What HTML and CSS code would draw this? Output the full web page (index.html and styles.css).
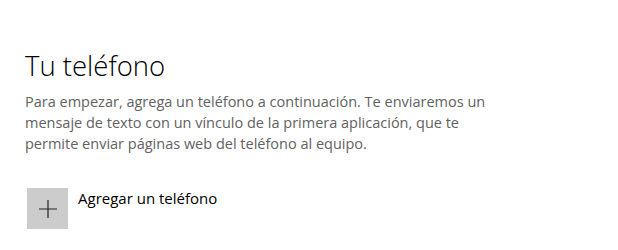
FILE: index.html
```html
<!DOCTYPE html>
<html lang="es">
<head>
<meta charset="utf-8">
<link rel="stylesheet" href="styles.css">
</head>
<body>
<main class="page">
  <h1 class="title">Tu teléfono</h1>
  <p class="desc">Para empezar, agrega un teléfono a continuación. Te enviaremos un mensaje de texto con un vínculo de la primera aplicación, que te permite enviar páginas web del teléfono al equipo.</p>
  <div class="add">
    <div class="add-btn">
      <svg width="18" height="18" viewBox="0 0 18 18"><path d="M9 0v18M0 9h18" stroke="#222" stroke-width="1.2" fill="none"/></svg>
    </div>
    <span class="add-label">Agregar un teléfono</span>
  </div>
</main>
</body>
</html>
```
FILE: styles.css
```css
html, body {
  margin: 0;
  background: #fff;
}
.page {
  padding: 49px 0 0 25px;
  font-family: "Open Sans", "Noto Sans", sans-serif;
}
.title {
  margin: 0;
  font-size: 27.5px;
  font-weight: 300;
  line-height: 34px;
  color: #000;
}
.desc {
  margin: 8px 0 0;
  width: 480px;
  font-size: 14.5px;
  line-height: 21px;
  color: #626262;
}
.add {
  display: flex;
  align-items: flex-start;
  gap: 10px;
  margin: 34px 0 0 2px;
}
.add-btn {
  width: 41px;
  height: 41px;
  background: #cccccc;
  display: flex;
  align-items: center;
  justify-content: center;
}
.add-label {
  font-size: 15px;
  line-height: 20px;
  color: #000;
}
```
